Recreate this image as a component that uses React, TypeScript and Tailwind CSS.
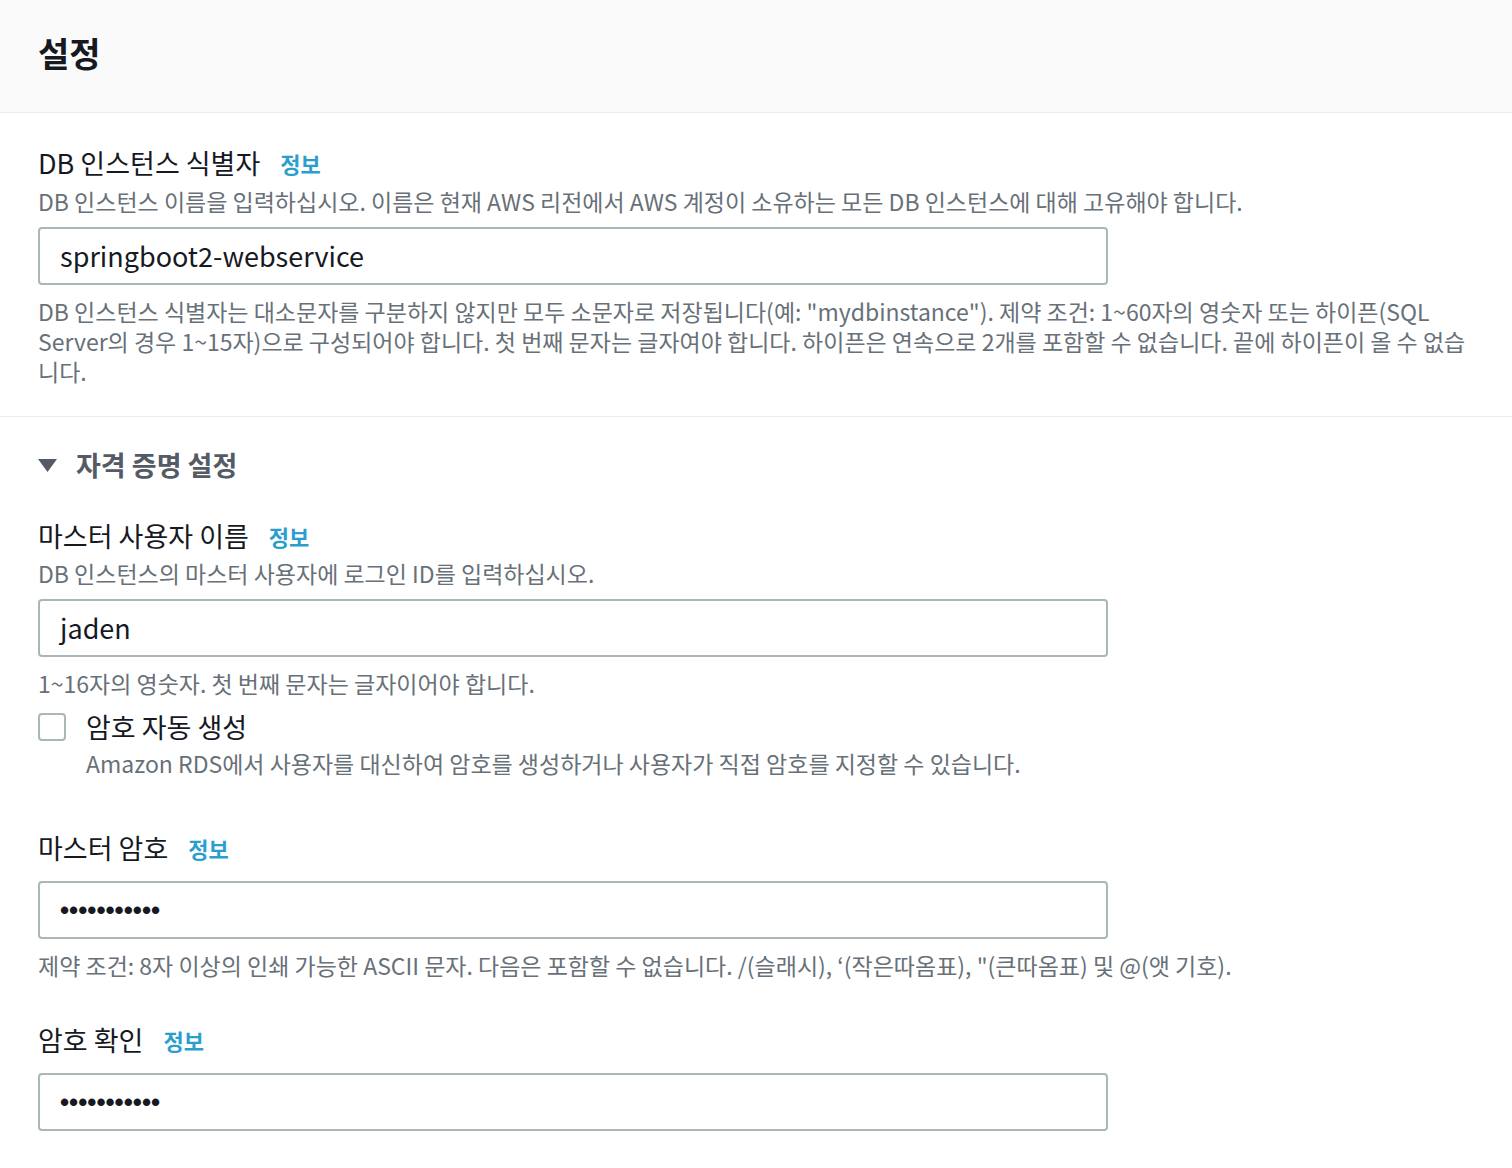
import React from 'react';

const font = { fontFamily: '"Noto Sans CJK KR", "Noto Sans", sans-serif' };

const InfoLink = () => (
  <a className="ml-[20px] text-[22px] font-bold text-[#2a9fcd] leading-[34px]">정보</a>
);

const FieldLabel = ({ children }: { children: React.ReactNode }) => (
  <div className="flex items-center h-[34px]">
    <span className="text-[27px] leading-[34px] text-[#16191f]">{children}</span>
    <InfoLink />
  </div>
);

const Hint = ({ children, className = '' }: { children: React.ReactNode; className?: string }) => (
  <div className={`text-[23px] leading-[30px] text-[#687078] ${className}`}>{children}</div>
);

const TextBox = ({ value, password = false }: { value: string; password?: boolean }) => (
  <div className="w-[1070px] h-[58px] border-2 border-[#aab7b8] rounded-[4px] bg-white flex items-center px-[20px]">
    {password ? (
      <span
        className="text-[26px] font-bold text-[#16191f]"
        style={{ fontFamily: '"Liberation Sans", sans-serif' }}
      >
        {value}
      </span>
    ) : (
      <span className="text-[27px] text-[#16191f]">{value}</span>
    )}
  </div>
);

export default function App() {
  return (
    <div className="w-[1512px] min-h-[1168px] bg-white" style={font}>
      {/* 헤더 */}
      <div className="h-[113px] bg-[#fafafa] border-b border-[#eaeded] px-[38px] flex items-center">
        <h2 className="text-[34px] font-bold text-[#16191f] -mt-[8px]">설정</h2>
      </div>

      {/* DB 인스턴스 식별자 */}
      <div className="px-[38px] pt-[33px] pb-[30px] border-b border-[#eaeded]">
        <FieldLabel>DB 인스턴스 식별자</FieldLabel>
        <Hint className="mt-[6px] whitespace-nowrap">
          DB 인스턴스 이름을 입력하십시오. 이름은 현재 AWS 리전에서 AWS 계정이 소유하는 모든 DB 인스턴스에 대해 고유해야 합니다.
        </Hint>
        <div className="mt-[11px]">
          <TextBox value="springboot2-webservice" />
        </div>
        <Hint className="mt-[11px] whitespace-nowrap">
          <div>DB 인스턴스 식별자는 대소문자를 구분하지 않지만 모두 소문자로 저장됩니다(예: "mydbinstance"). 제약 조건: 1~60자의 영숫자 또는 하이픈(SQL</div>
          <div>Server의 경우 1~15자)으로 구성되어야 합니다. 첫 번째 문자는 글자여야 합니다. 하이픈은 연속으로 2개를 포함할 수 없습니다. 끝에 하이픈이 올 수 없습</div>
          <div>니다.</div>
        </Hint>
      </div>

      {/* 자격 증명 설정 */}
      <div className="px-[38px] pt-[30px]">
        <div className="flex items-center h-[36px]">
          <svg width="19" height="13" viewBox="0 0 19 13" className="mr-[19px]">
            <polygon points="0,0 19,0 9.5,13" fill="#545b64" />
          </svg>
          <span className="text-[27px] font-bold text-[#545b64]">자격 증명 설정</span>
        </div>

        <div className="mt-[36px]">
          <FieldLabel>마스터 사용자 이름</FieldLabel>
          <Hint className="mt-[5px]">DB 인스턴스의 마스터 사용자에 로그인 ID를 입력하십시오.</Hint>
          <div className="mt-[11px]">
            <TextBox value="jaden" />
          </div>
          <Hint className="mt-[11px]">1~16자의 영숫자. 첫 번째 문자는 글자이어야 합니다.</Hint>
        </div>

        <div className="mt-[12px] flex items-start">
          <div className="w-[28px] h-[28px] mt-[3px] border-2 border-[#aab7b8] rounded-[4px] bg-white shrink-0" />
          <div className="ml-[20px]">
            <div className="text-[27px] leading-[34px] text-[#16191f]">암호 자동 생성</div>
            <Hint className="mt-[4px]">
              Amazon RDS에서 사용자를 대신하여 암호를 생성하거나 사용자가 직접 암호를 지정할 수 있습니다.
            </Hint>
          </div>
        </div>

        <div className="mt-[53px]">
          <FieldLabel>마스터 암호</FieldLabel>
          <div className="mt-[16px]">
            <TextBox value="•••••••••••" password />
          </div>
          <Hint className="mt-[11px]">
            제약 조건: 8자 이상의 인쇄 가능한 ASCII 문자. 다음은 포함할 수 없습니다. /(슬래시), ‘(작은따옴표), "(큰따옴표) 및 @(앳 기호).
          </Hint>
        </div>

        <div className="mt-[43px]">
          <FieldLabel>암호 확인</FieldLabel>
          <div className="mt-[16px]">
            <TextBox value="•••••••••••" password />
          </div>
        </div>
      </div>
    </div>
  );
}
